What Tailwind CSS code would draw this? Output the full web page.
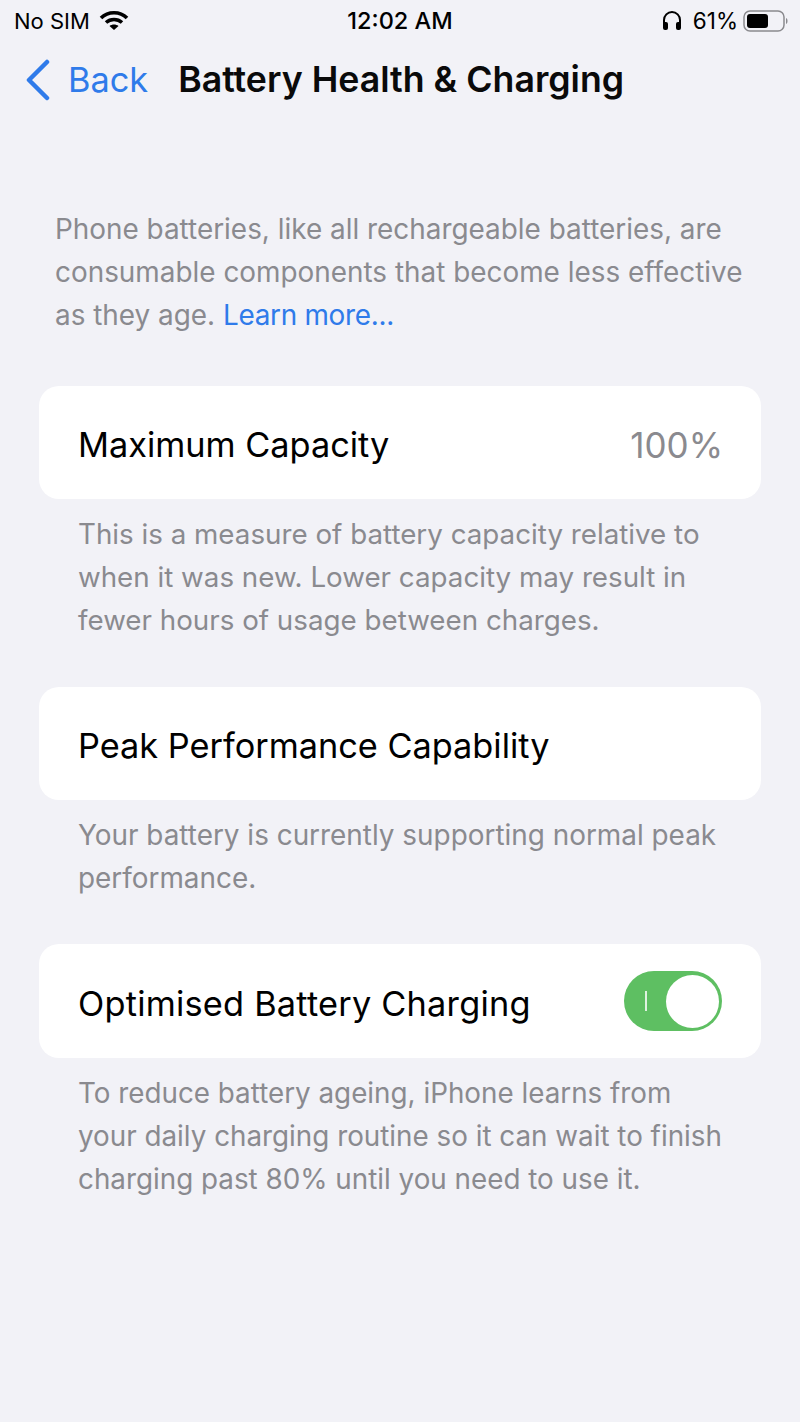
<!DOCTYPE html>
<html>
  <head>
    <meta charset="UTF-8" />
    <meta name="viewport" content="width=device-width, initial-scale=1.0" />
    <title>Battery Health &amp; Charging</title>
    <script src="https://cdn.jsdelivr.net/npm/@tailwindcss/browser@4"></script>
  </head>
  <body class="bg-[#f2f2f7] font-['Inter',sans-serif] text-black">
    <main class="w-[800px] h-[1422px] overflow-hidden flex flex-col">
      <!-- Status bar -->
      <div class="h-[42px] px-[14px] grid grid-cols-3 items-center text-[22px]">
        <div class="flex items-center gap-[9px]">
          <span>No SIM</span>
          <svg width="30" height="22" viewBox="0 0 30 22" fill="none" stroke="#000" stroke-width="3.6">
            <path d="M2 8 C9 1 21 1 28 8" />
            <path d="M7 12.5 C11.5 8.5 18.5 8.5 23 12.5" />
            <path d="M15 20 L10.5 16 C13 14 17 14 19.5 16 Z" fill="#000" stroke="none" />
          </svg>
        </div>
        <div class="text-center font-medium text-[23.5px] whitespace-nowrap">12:02 AM</div>
        <div class="flex items-center justify-end">
          <svg width="20" height="22" viewBox="0 0 20 22" fill="none">
            <path d="M2 14 V10 A8 8 0 0 1 18 10 V14" stroke="#000" stroke-width="2" />
            <rect x="1" y="12" width="5" height="8" rx="2" fill="#000" />
            <rect x="14" y="12" width="5" height="8" rx="2" fill="#000" />
          </svg>
          <span class="ml-[11px] mr-[5px] text-[22.5px]">61%</span>
          <svg class="-mr-[5px]" width="48" height="24" viewBox="0 0 48 24" fill="none">
            <rect x="1" y="2" width="40" height="20" rx="6" stroke="#8a8a8e" stroke-width="1.5" />
            <rect x="4" y="5" width="21" height="14" rx="3" fill="#000" />
            <path d="M43 9 C45 9.5 45 14.5 43 15 Z" fill="#8a8a8e" />
          </svg>
        </div>
      </div>

      <!-- Nav -->
      <div class="h-[76px] pl-[25px] flex items-center">
        <svg width="26" height="42" viewBox="0 0 26 42" fill="none" stroke="#2f7bea" stroke-width="4.5" stroke-linecap="round" stroke-linejoin="round">
          <path d="M22 3 L4 21 L22 39" />
        </svg>
        <span class="ml-[17px] text-[34.3px] text-[#2f7bea]">Back</span>
        <span class="ml-[30px] text-[35.7px] font-semibold text-[#0a0a0a]">Battery Health &amp; Charging</span>
      </div>

      <!-- Intro -->
      <p class="mt-[90px] ml-[55px] mr-[48px] text-[27.9px] leading-[43px] text-[#8a8a8f]">
        Phone batteries, like all rechargeable batteries, are consumable components that become less effective as they age. <span class="text-[#2f7bea] tracking-[-0.3px]">Learn more...</span>
      </p>

      <!-- Maximum capacity -->
      <section class="mt-[49px] mx-[39px]">
        <div class="h-[113px] pl-[39px] pr-[38px] pt-[5px] bg-white rounded-[20px] flex items-center justify-between text-[34.3px]">
          <span>Maximum Capacity</span>
          <span class="text-[35px] text-[#8a8a8f]">100%</span>
        </div>
        <p class="mt-[14px] pl-[39px] pr-[30px] text-[27.75px] leading-[43px] text-[#8a8a8f]">
          This is a measure of battery capacity relative to when it was new. Lower capacity may result in fewer hours of usage between charges.
        </p>
      </section>

      <!-- Peak performance -->
      <section class="mt-[45px] mx-[39px]">
        <div class="h-[113px] pl-[39px] pr-[38px] pt-[5px] bg-white rounded-[20px] flex items-center text-[34.3px]">
          <span>Peak Performance Capability</span>
        </div>
        <p class="mt-[14px] pl-[39px] pr-[30px] text-[27.9px] leading-[43px] text-[#8a8a8f]">
          Your battery is currently supporting normal peak performance.
        </p>
      </section>

      <!-- Optimised charging -->
      <section class="mt-[44px] mx-[39px]">
        <div class="h-[114px] pl-[39px] pr-[39px] bg-white rounded-[20px] flex items-center justify-between text-[34.3px]">
          <span class="pt-[5px] tracking-[0.23px]">Optimised Battery Charging</span>
          <div class="w-[98px] h-[60px] rounded-full bg-[#5ebf62] p-[3px] flex items-center justify-end relative">
            <span class="absolute left-[21px] top-[20px] w-[2px] h-[20px] bg-white/80"></span>
            <span class="w-[53px] h-[53px] rounded-full bg-white"></span>
          </div>
        </div>
        <p class="mt-[14px] pl-[39px] pr-[30px] text-[27.8px] leading-[43px] text-[#8a8a8f]">
          To reduce battery ageing, iPhone learns from your daily charging routine so it can wait to finish charging past 80% until you need to use it.
        </p>
      </section>
    </main>
  </body>
</html>
